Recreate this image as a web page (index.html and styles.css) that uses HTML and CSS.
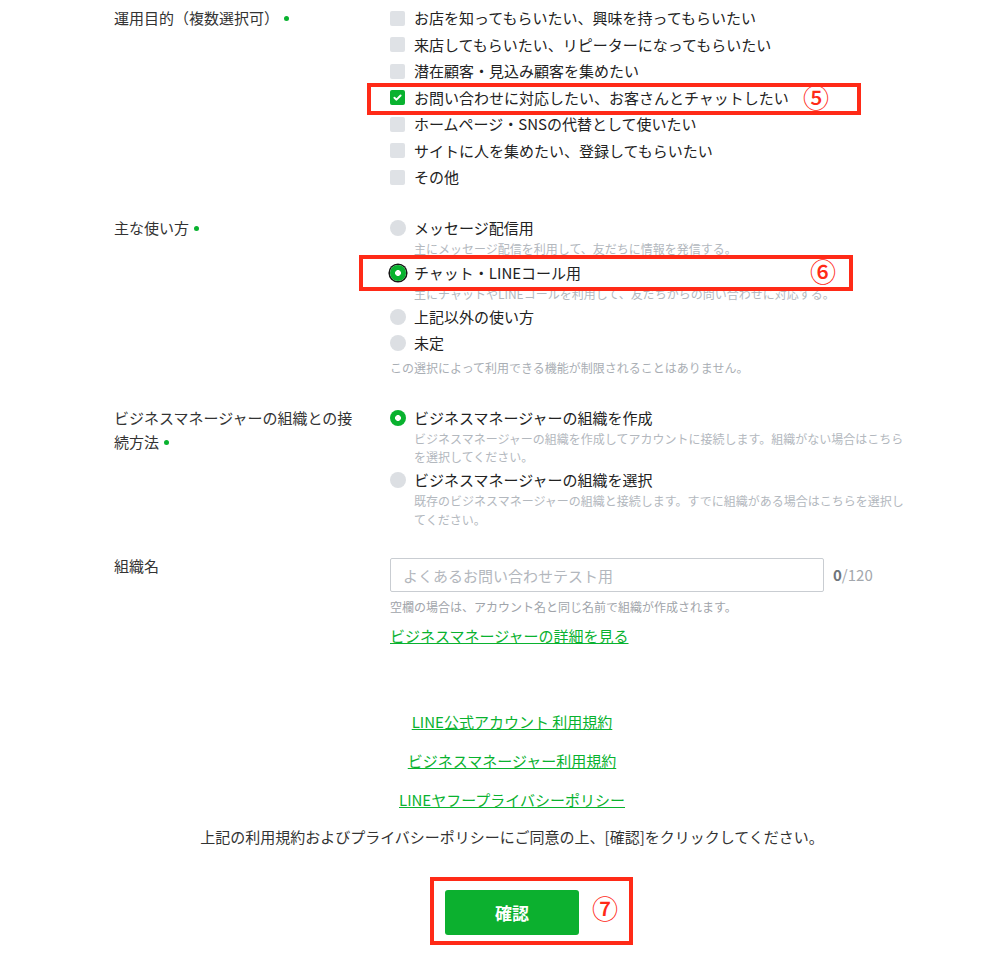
FILE: index.html
```html
<!DOCTYPE html>
<html lang="ja">
<head>
<meta charset="utf-8">
<title>LINE公式アカウント</title>
<link rel="stylesheet" href="styles.css">
</head>
<body>
<div class="page">
  <form class="form">
    <div class="field f-purpose">
      <div class="label">運用目的（複数選択可）<span class="req"></span></div>
      <div class="control">
        <div class="opt"><span class="cbox"></span><span>お店を知ってもらいたい、興味を持ってもらいたい</span></div>
        <div class="opt"><span class="cbox"></span><span>来店してもらいたい、リピーターになってもらいたい</span></div>
        <div class="opt"><span class="cbox"></span><span>潜在顧客・見込み顧客を集めたい</span></div>
        <div class="opt"><span class="cbox on"><svg width="15" height="15" viewBox="0 0 15 15"><path d="M4.4 7.7 6.5 9.7 10.6 5.5" fill="none" stroke="#fff" stroke-width="1.9" stroke-linecap="round" stroke-linejoin="round"/></svg></span><span>お問い合わせに対応したい、お客さんとチャットしたい</span></div>
        <div class="opt"><span class="cbox"></span><span>ホームページ・SNSの代替として使いたい</span></div>
        <div class="opt"><span class="cbox"></span><span>サイトに人を集めたい、登録してもらいたい</span></div>
        <div class="opt"><span class="cbox"></span><span>その他</span></div>
      </div>
    </div>

    <div class="field f-usage">
      <div class="label">主な使い方<span class="req"></span></div>
      <div class="control">
        <div class="ritem has-desc">
          <div class="rline"><span class="radio"></span><span>メッセージ配信用</span></div>
          <div class="desc">主にメッセージ配信を利用して、友だちに情報を発信する。</div>
        </div>
        <div class="ritem has-desc">
          <div class="rline"><span class="radio on focus"></span><span>チャット・LINEコール用</span></div>
          <div class="desc">主にチャットやLINEコールを利用して、友だちからの問い合わせに対応する。</div>
        </div>
        <div class="ritem">
          <div class="rline"><span class="radio"></span><span>上記以外の使い方</span></div>
        </div>
        <div class="ritem">
          <div class="rline"><span class="radio"></span><span>未定</span></div>
        </div>
        <div class="note">この選択によって利用できる機能が制限されることはありません。</div>
      </div>
    </div>

    <div class="field f-bm">
      <div class="label">ビジネスマネージャーの組織との接続方法<span class="req"></span></div>
      <div class="control">
        <div class="ritem has-desc">
          <div class="rline"><span class="radio on ring"></span><span>ビジネスマネージャーの組織を作成</span></div>
          <div class="desc">ビジネスマネージャーの組織を作成してアカウントに接続します。組織がない場合はこちらを選択してください。</div>
        </div>
        <div class="ritem has-desc">
          <div class="rline"><span class="radio"></span><span>ビジネスマネージャーの組織を選択</span></div>
          <div class="desc">既存のビジネスマネージャーの組織と接続します。すでに組織がある場合はこちらを選択してください。</div>
        </div>
      </div>
    </div>

    <div class="field f-name">
      <div class="label label-flat">組織名</div>
      <div class="control">
        <div class="name-row">
          <input class="name-input" type="text" placeholder="よくあるお問い合わせテスト用">
          <span class="counter"><b>0</b>/120</span>
        </div>
        <div class="helper">空欄の場合は、アカウント名と同じ名前で組織が作成されます。</div>
        <a class="more" href="#">ビジネスマネージャーの詳細を見る</a>
      </div>
    </div>

    <div class="terms">
      <a href="#">LINE公式アカウント 利用規約</a>
      <a href="#">ビジネスマネージャー利用規約</a>
      <a href="#">LINEヤフープライバシーポリシー</a>
    </div>
    <p class="agree">上記の利用規約およびプライバシーポリシーにご同意の上、[確認]をクリックしてください。</p>
    <div class="submit-wrap"><button class="btn" type="button">確認</button></div>
  </form>

  <div class="mark m5"></div>
  <div class="mark m6"></div>
  <div class="mark m7"></div>
  <span class="num n5">⑤</span>
  <span class="num n6">⑥</span>
  <span class="num n7">⑦</span>
</div>
</body>
</html>
```

FILE: styles.css
```css
* { box-sizing: border-box; }
html, body { margin: 0; padding: 0; background: #fff; }
body {
  font-family: "Noto Sans CJK JP", "Noto Sans", sans-serif;
  color: #333;
  font-size: 15px;
}
.page { position: relative; width: 992px; height: 956px; overflow: hidden; }
.form { margin-left: 114px; width: 796px; padding-top: 5px; }

.field { display: grid; grid-template-columns: 250px 520px; column-gap: 26px; }
.label { font-size: 15px; line-height: 24px; padding-top: 1.25px; color: #333; }
.label-flat { padding-top: 0; }
.req {
  display: inline-block; width: 5px; height: 5px; border-radius: 50%;
  background: #09b22f; margin-left: 5px; vertical-align: 3px;
}

.opt { display: flex; align-items: center; gap: 9px; height: 26.5px; line-height: 20px; color: #222; }
.cbox { width: 15px; height: 15px; border-radius: 2px; background: #dfe2e6; flex: none; display: block; }
.cbox svg { display: block; }
.cbox.on { background: #09b22f; }

.f-usage { margin-top: 24.5px; }
.f-bm { margin-top: 27.25px; }
.f-name { margin-top: 24.25px; }

.ritem { padding: 3.25px 0; }
.ritem.has-desc { padding-bottom: 0.5px; }
.rline { display: flex; align-items: center; gap: 8px; height: 20px; line-height: 20px; color: #222; }
.radio { width: 16px; height: 16px; border-radius: 50%; background: #dcdfe3; flex: none; display: block; }
.radio.on.focus {
  background: radial-gradient(circle, #fff 0 2.6px, #09b22f 3.2px);
  box-shadow: 0 0 0 1.6px #161616;
}
.radio.on.ring { background: radial-gradient(circle, #fff 0 2.6px, #09b22f 3.2px); }
.desc { padding-left: 24px; font-size: 12px; line-height: 18.5px; margin-top: 2px; color: #b3b8be; }
.note { font-size: 12px; line-height: 18px; margin-top: 2.5px; color: #a9aeb4; }

.name-row { display: flex; align-items: center; gap: 9px; margin-top: 4px; }
.name-input {
  width: 434px; height: 34px; border: 1px solid #c9cdd2; border-radius: 2px;
  padding: 0 12px; font-family: "Noto Sans CJK JP", "Noto Sans", sans-serif;
  font-size: 15px; color: #333; background: #fff; outline: none;
}
.name-input::placeholder { color: #b3b7bd; }
.counter { font-size: 15px; color: #a3a7ad; line-height: 20px; }
.counter b { color: #70757b; font-weight: 700; }
.helper { font-size: 12px; line-height: 18px; margin-top: 6px; color: #9fa4aa; }
.more {
  display: inline-block; margin-top: 10px; line-height: 20px; font-size: 15px;
  color: #09b22f; text-decoration: underline;
}

.terms { margin-top: 65.5px; display: flex; flex-direction: column; align-items: center; gap: 19px; }
.terms a { line-height: 20px; font-size: 15px; color: #09b22f; text-decoration: underline; }
.agree { margin: 17.5px 0 0; text-align: center; line-height: 20px; font-size: 15px; color: #333; }
.submit-wrap { margin-top: 43px; display: flex; justify-content: center; }
.btn {
  width: 134px; height: 45px; background: #0cb02f; color: #fff; border: 0; border-radius: 3px;
  font-family: "Noto Sans CJK JP", "Noto Sans", sans-serif; font-size: 17px; font-weight: 700;
}

.mark { position: absolute; border: 4px solid #ff2a17; }
.m5 { left: 367px; top: 83px; width: 494px; height: 32px; }
.m6 { left: 359px; top: 255px; width: 494px; height: 36px; }
.m7 { left: 430px; top: 877px; width: 203px; height: 68px; }
.num {
  position: absolute; color: #ff2a17; font-size: 26px; line-height: 22px; width: 28px; text-align: center;
  font-family: "Noto Sans CJK JP", "Noto Sans", sans-serif; font-weight: 500;
}
.n5 { left: 802px; top: 86px; }
.n6 { left: 809px; top: 260px; }
.n7 { left: 591px; top: 897px; }
```
